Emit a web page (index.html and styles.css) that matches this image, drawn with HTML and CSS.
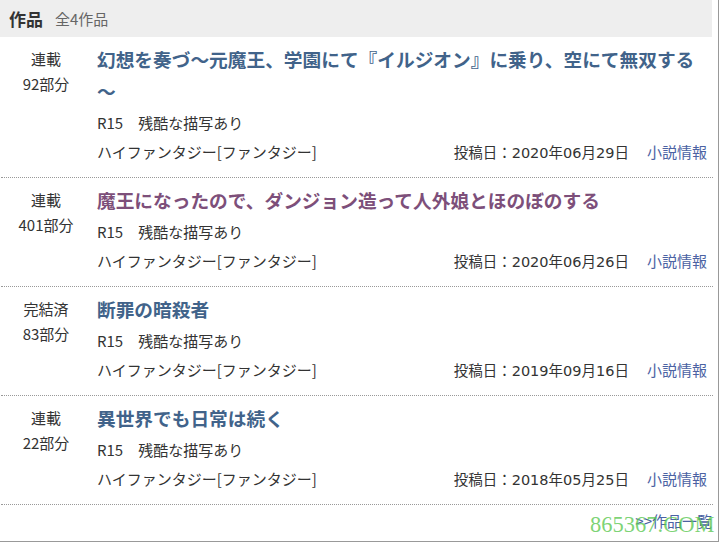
FILE: index.html
```html
<!DOCTYPE html>
<html lang="ja">
	<head>
		<meta charset="UTF-8" />
		<meta name="viewport" content="width=device-width, initial-scale=1.0" />
		<title>作品一覧</title>
		<link rel="stylesheet" href="styles.css">
	</head>
	<body>
		<div class="works">
			<div class="works-head">
				<span class="works-title">作品</span>
				<span class="works-count">全4作品</span>
			</div>

			<div class="work">
				<div class="work-side">連載<br>92部分</div>
				<div class="work-main">
					<a class="work-title" href="#">幻想を奏づ～元魔王、学園にて『イルジオン』に乗り、空にて無双する～</a>
					<div class="work-info">R15　残酷な描写あり</div>
					<div class="work-info work-foot">
						<span>ハイファンタジー[ファンタジー]</span>
						<div class="work-meta"><span class="work-date">投稿日：2020年06月29日</span><a class="work-link" href="#">小説情報</a></div>
					</div>
				</div>
			</div>

			<div class="work">
				<div class="work-side">連載<br>401部分</div>
				<div class="work-main">
					<a class="work-title visited" href="#">魔王になったので、ダンジョン造って人外娘とほのぼのする</a>
					<div class="work-info">R15　残酷な描写あり</div>
					<div class="work-info work-foot">
						<span>ハイファンタジー[ファンタジー]</span>
						<div class="work-meta"><span class="work-date">投稿日：2020年06月26日</span><a class="work-link" href="#">小説情報</a></div>
					</div>
				</div>
			</div>

			<div class="work">
				<div class="work-side">完結済<br>83部分</div>
				<div class="work-main">
					<a class="work-title" href="#">断罪の暗殺者</a>
					<div class="work-info">R15　残酷な描写あり</div>
					<div class="work-info work-foot">
						<span>ハイファンタジー[ファンタジー]</span>
						<div class="work-meta"><span class="work-date">投稿日：2019年09月16日</span><a class="work-link" href="#">小説情報</a></div>
					</div>
				</div>
			</div>

			<div class="work">
				<div class="work-side">連載<br>22部分</div>
				<div class="work-main">
					<a class="work-title" href="#">異世界でも日常は続く</a>
					<div class="work-info">R15　残酷な描写あり</div>
					<div class="work-info work-foot">
						<span>ハイファンタジー[ファンタジー]</span>
						<div class="work-meta"><span class="work-date">投稿日：2018年05月25日</span><a class="work-link" href="#">小説情報</a></div>
					</div>
				</div>
			</div>

			<div class="works-more">
				<a href="#">&gt;&gt;作品一覧</a>
			</div>
		</div>
		<div class="watermark">865367.COM</div>
	</body>
</html>
```
FILE: styles.css
```css
body {
	margin: 0;
	font-family: "Noto Sans CJK JP", sans-serif;
	color: #333;
	background: #fff;
}

a {
	text-decoration: none;
}

.works {
	width: 718px;
	height: 541px;
	border-right: 1px solid #999;
	border-bottom: 1px solid #999;
	box-sizing: content-box;
}

.works-head {
	background: #eee;
	width: 712px;
	height: 37px;
	display: flex;
	align-items: center;
	padding-left: 9px;
	box-sizing: border-box;
}

.works-title {
	font-size: 17px;
	font-weight: bold;
	color: #333;
}

.works-count {
	font-size: 15px;
	color: #666;
	margin-left: 12px;
}

.work {
	display: flex;
	width: 712px;
	margin-left: 1px;
	padding: 6px 6px 11px 0;
	box-sizing: border-box;
	border-bottom: 1px dotted #999;
	font-size: 15px;
}

.work:first-of-type {
	padding-top: 7px;
}

.work-side {
	width: 90px;
	flex: none;
	text-align: center;
	line-height: 24.5px;
	padding-top: 4px;
	margin-right: 6px;
}

.work-main {
	flex: 1;
	min-width: 0;
}

.work-title {
	display: block;
	font-size: 18.7px;
	font-weight: bold;
	line-height: 32px;
	color: #41638a;
	margin-bottom: 1px;
}

.work-title.visited {
	color: #7d4f7a;
}

.work-info {
	line-height: 29px;
	height: 29px;
}

.work-foot {
	display: flex;
	justify-content: space-between;
}

.work-meta {
	display: flex;
	align-items: baseline;
}

.work-date {
	font-family: "DejaVu Sans", "Noto Sans CJK JP", sans-serif;
	font-size: 14.5px;
}

.work-link {
	color: #4b62a3;
	margin-left: 18px;
}

.works-more {
	width: 712px;
	text-align: right;
	font-size: 15px;
	line-height: 32px;
}

.works-more a {
	color: #4b62a3;
}

.watermark {
	position: absolute;
	left: 590px;
	top: 512px;
	font-family: "Liberation Serif", serif;
	font-size: 22.5px;
	color: rgba(90, 200, 80, 0.8);
	pointer-events: none;
}
```
